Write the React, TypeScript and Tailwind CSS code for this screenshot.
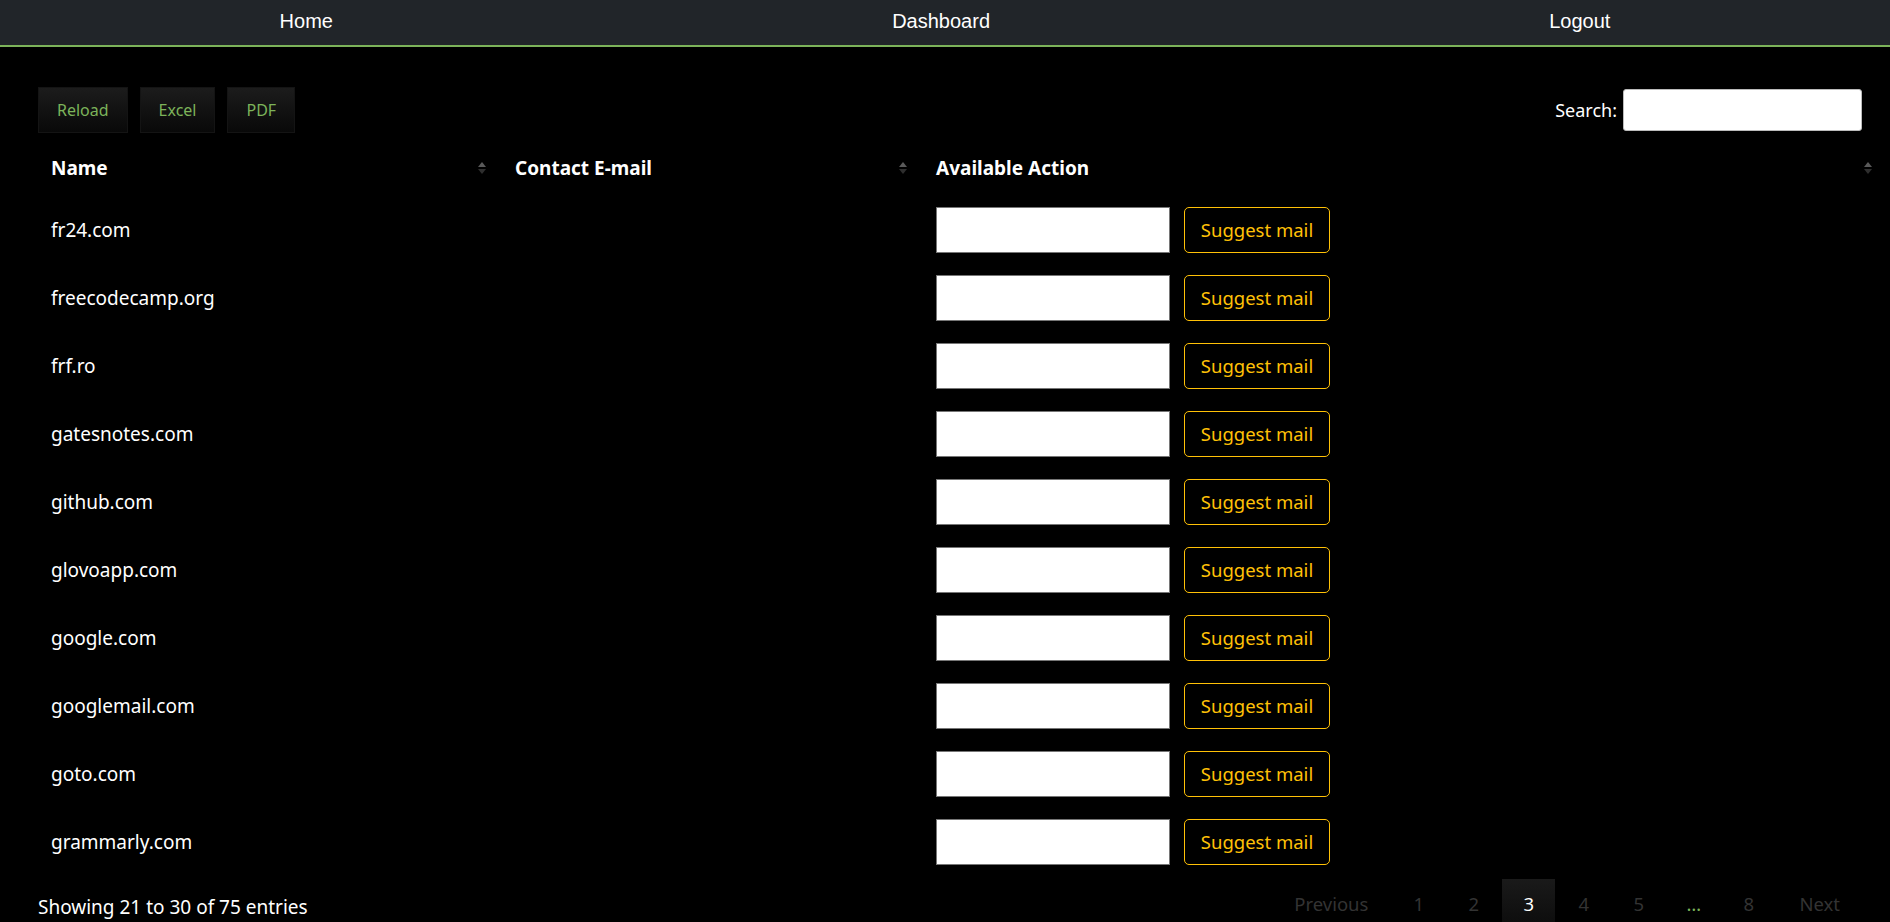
import React from 'react';

const domains = [
  'fr24.com',
  'freecodecamp.org',
  'frf.ro',
  'gatesnotes.com',
  'github.com',
  'glovoapp.com',
  'google.com',
  'googlemail.com',
  'goto.com',
  'grammarly.com',
];

const SortIcon = () => (
  <span className="flex flex-col items-center gap-[2px]">
    <svg width="8" height="5" viewBox="0 0 8 5">
      <path d="M4 0 L8 5 L0 5 Z" fill="#5a5a5a" />
    </svg>
    <svg width="8" height="5" viewBox="0 0 8 5">
      <path d="M0 0 L8 0 L4 5 Z" fill="#2e2e2e" />
    </svg>
  </span>
);

const ToolButton = ({ label }: { label: string }) => (
  <button className="h-[46px] px-[18px] bg-gradient-to-b from-[#1c1c1c] to-[#090909] border border-[#141414] text-[#7cb35a] text-[16px]">
    {label}
  </button>
);

const pages = ['1', '2', '3', '4', '5', '…', '8'];

export default function App() {
  return (
    <div className="min-h-screen bg-black text-white font-['Noto_Sans',sans-serif]">
      {/* top nav */}
      <nav className="h-[47px] bg-[#212529] border-b-2 border-[#7cb35a] flex justify-around items-center font-['Liberation_Sans',Arial,sans-serif] text-[20px] pb-[4px]">
        <a>Home</a>
        <a>Dashboard</a>
        <a>Logout</a>
      </nav>

      <div className="pl-[38px] pr-[28px] pt-[40px]">
        {/* toolbar */}
        <div className="flex items-center justify-between">
          <div className="flex gap-[12px]">
            <ToolButton label="Reload" />
            <ToolButton label="Excel" />
            <ToolButton label="PDF" />
          </div>
          <label className="flex items-center gap-[6px] text-[18px]">
            Search:
            <input className="w-[239px] h-[42px] bg-white rounded-[3px] border border-[#bbb]" />
          </label>
        </div>

        {/* table */}
        <div className="mr-[-26px]">
          <table className="w-full mt-[7px] border-collapse text-[19px]">
            <thead>
              <tr className="h-[56px]">
                <th className="w-[464px] pl-[13px] pr-[16px] text-left font-bold">
                  <div className="flex items-center justify-between">
                    <span>Name</span>
                    <SortIcon />
                  </div>
                </th>
                <th className="w-[421px] pl-[13px] pr-[16px] text-left font-bold">
                  <div className="flex items-center justify-between">
                    <span>Contact E-mail</span>
                    <SortIcon />
                  </div>
                </th>
                <th className="pl-[13px] pr-[16px] text-left font-bold">
                  <div className="flex items-center justify-between">
                    <span>Available Action</span>
                    <SortIcon />
                  </div>
                </th>
              </tr>
            </thead>
            <tbody>
              {domains.map((d) => (
                <tr key={d} className="h-[68px]">
                  <td className="pl-[13px]">{d}</td>
                  <td className="pl-[13px]"></td>
                  <td className="pl-[13px]">
                    <div className="flex items-center gap-[14px]">
                      <input className="w-[234px] h-[46px] bg-white border border-[#767676]" />
                      <button className="w-[146px] h-[46px] rounded-[5px] border border-[#ffc107] text-[#ffc107] text-[18.5px]">
                        Suggest mail
                      </button>
                    </div>
                  </td>
                </tr>
              ))}
            </tbody>
          </table>
        </div>

        {/* footer */}
        <div className="flex items-start justify-between mt-[3px]">
          <div className="pt-[14px] text-[19px]">Showing 21 to 30 of 75 entries</div>
          <div className="flex items-center text-[18.5px] text-[#333]">
            <span className="px-[22px] h-[50px] flex items-center">Previous</span>
            {pages.map((p) => (
              <span
                key={p}
                className={
                  p === '3'
                    ? 'w-[53px] h-[50px] flex items-center justify-center ml-[2px] bg-gradient-to-b from-[#1a1a1a] to-[#0c0c0c] text-white'
                    : p === '…'
                    ? 'w-[53px] h-[50px] flex items-center justify-center ml-[2px] text-[#7cb35a]'
                    : 'w-[53px] h-[50px] flex items-center justify-center ml-[2px]'
                }
              >
                {p}
              </span>
            ))}
            <span className="px-[22px] h-[50px] flex items-center ml-[2px]">Next</span>
          </div>
        </div>
      </div>
    </div>
  );
}
